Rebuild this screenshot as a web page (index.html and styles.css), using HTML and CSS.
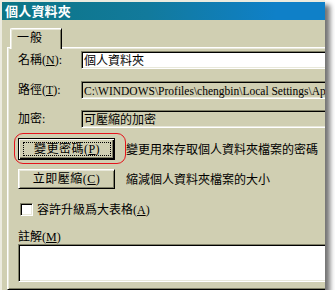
FILE: index.html
```html
<!DOCTYPE html>
<html>
<head>
<meta charset="utf-8">
<link rel="stylesheet" href="styles.css">
</head>
<body>
<div class="win">
  <div class="title">個人資料夾</div>
  <div class="client">
    <div class="tabs"><div class="tab">一般</div></div>
    <div class="panel">
      <div class="field r-name"><span class="lbl">名稱(<u>N</u>):</span><div class="box edit">個人資料夾</div></div>
      <div class="field r-path"><span class="lbl">路徑(<u>T</u>):</span><div class="box ro path">C:\WINDOWS\Profiles\chengbin\Local Settings\App</div></div>
      <div class="field r-enc"><span class="lbl">加密:</span><div class="box ro">可壓縮的加密</div></div>
      <div class="act r-b1"><div class="btn def"><span class="focus">變更密碼(<u>P</u>)</span></div><span class="desc">變更用來存取個人資料夾檔案的密碼</span></div>
      <div class="act r-b2"><div class="btn">立即壓縮(<u>C</u>)</div><span class="desc">縮減個人資料夾檔案的大小</span></div>
      <div class="chk"><span class="cbox"></span><span>容許升級爲大表格(<u>A</u>)</span></div>
      <div class="note">註解(<u>M</u>)</div>
      <div class="memo"></div>
    </div>
  </div>
  <div class="mark"></div>
</div>
</body>
</html>
```

FILE: styles.css
```css
* { box-sizing: border-box; }
html, body { margin: 0; background: #fff; }
body {
  font: 12px/14px "Liberation Serif", "Noto Sans CJK TC", serif;
  color: #000;
}
u { text-decoration: underline; text-underline-offset: 1px; }

.win {
  position: relative;
  width: 325px;
  height: 290px;
  background: #d0cfb2;
  border-top: 2px solid #ecebdf;
  border-left: 2px solid #ecebdf;
  box-shadow: 5px 5px 5px rgba(0, 0, 0, 0.55);
  overflow: hidden;
}

.title {
  height: 18px;
  background: linear-gradient(90deg, #0c7585 0%, #127a9c 45%, #0f80c8 85%, #0f80c8 100%);
  color: #fff;
  font: bold 13px/18px "Noto Sans CJK TC", sans-serif;
  letter-spacing: 0.2px;
  padding-left: 3px;
}

.client {
  padding: 8px 0 0 5px;
}

.tabs {
  display: flex;
  padding-left: 3px;
  margin-bottom: -2px;
  position: relative;
  z-index: 1;
}
.tab {
  width: 52px;
  height: 21px;
  background: #d0cfb2;
  border-top: 1px solid #fff;
  border-left: 1px solid #fff;
  border-right: 1px solid #000;
  border-top-left-radius: 2px;
  box-shadow: inset 1px 1px 0 #e8e8da, inset -1px 0 0 #808068;
  padding: 1px 0 0 6px;
  font-family: "Noto Sans CJK TC", sans-serif;
  letter-spacing: 1px;
}

.panel {
  height: 243px;
  border-top: 1px solid #fff;
  border-left: 1px solid #fff;
  border-bottom: 1px solid #000;
  box-shadow: inset 1px 1px 0 #e8e8da, inset 0 -1px 0 #808068;
  padding: 3px 0 0 10px;
  display: flex;
  flex-direction: column;
}

.field {
  display: flex;
  align-items: center;
  height: 18px;
  flex: none;
}
.lbl {
  width: 63px;
  flex: none;
}
.box {
  flex: none;
  width: 260px;
  height: 18px;
  border-top: 1px solid #808068;
  border-left: 1px solid #808068;
  border-bottom: 1px solid #fff;
  border-right: 1px solid #fff;
  box-shadow: inset 1px 1px 0 #000, inset -1px -1px 0 #e8e8da;
  padding: 1px 0 0 2px;
  white-space: nowrap;
  overflow: hidden;
  font-family: "Noto Sans CJK TC", sans-serif;
}
.edit { background: #fff; }
.ro { background: #d0cfb2; }
.path { font-family: "Liberation Serif", serif; font-size: 11.5px; padding-top: 2px; }

.r-path { margin-top: 12px; }
.r-enc { margin-top: 11px; }

.act {
  display: flex;
  align-items: center;
  gap: 11px;
  flex: none;
  font-family: "Noto Sans CJK TC", sans-serif;
}
.r-b1 { margin-top: 10px; }
.r-b2 { margin-top: 9px; }

.btn {
  width: 97px;
  height: 20px;
  display: flex;
  align-items: center;
  justify-content: center;
  background: #d0cfb2;
  border-top: 1px solid #fff;
  border-left: 1px solid #fff;
  border-right: 1px solid #000;
  border-bottom: 1px solid #000;
  box-shadow: inset 1px 1px 0 #e8e8da, inset -1px -1px 0 #808068;
  font-family: "Liberation Serif", "Noto Sans CJK TC", serif;
  letter-spacing: 0.5px;
}
.btn.def {
  height: 22px;
  border: 1px solid #000;
  box-shadow: inset 1px 1px 0 #fff, inset -1px -1px 0 #000, inset -2px -2px 0 #808068;
  padding: 3px 3px 3px 4px;
}
.focus {
  flex: 1;
  align-self: stretch;
  display: flex;
  align-items: center;
  justify-content: center;
  border: 1px dotted #000;
}

.chk {
  display: flex;
  align-items: center;
  gap: 4px;
  margin: 14px 0 0 2px;
  height: 13px;
  flex: none;
  font-family: "Liberation Serif", "Noto Sans CJK TC", serif;
}
.cbox {
  width: 13px;
  height: 13px;
  flex: none;
  background: #fff;
  border-top: 1px solid #808068;
  border-left: 1px solid #808068;
  border-bottom: 1px solid #fff;
  border-right: 1px solid #fff;
  box-shadow: inset 1px 1px 0 #000, inset -1px -1px 0 #e8e8da;
}

.note {
  margin-top: 14px;
  flex: none;
}
.memo {
  flex: none;
  width: 320px;
  height: 38px;
  background: #fff;
  border-top: 1px solid #808068;
  border-left: 1px solid #808068;
  border-bottom: 1px solid #fff;
  box-shadow: inset 1px 1px 0 #000, inset 0 -1px 0 #e8e8da;
}

.mark {
  position: absolute;
  left: 12px;
  top: 131px;
  width: 112px;
  height: 31px;
  border: 1px solid #e4141c;
  border-radius: 9px;
}
```
